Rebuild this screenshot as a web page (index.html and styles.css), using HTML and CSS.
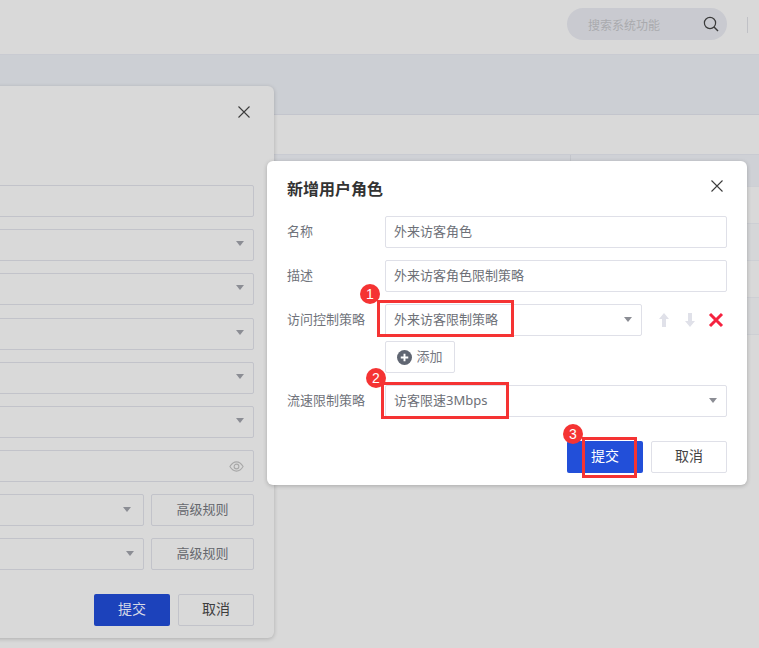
FILE: index.html
```html
<!DOCTYPE html>
<html lang="zh">
<head>
<meta charset="utf-8">
<title>新增用户角色</title>
<link rel="stylesheet" href="styles.css">
</head>
<body>
<div class="page">
  <header class="topbar">
    <div class="search">
      <span class="search-text">搜索系统功能</span>
      <svg class="search-icon" viewBox="0 0 16 16" width="16" height="16"><circle cx="7" cy="7" r="5.6" fill="none" stroke="#3a3a3a" stroke-width="1.2"/><path d="M11 11l4 4" stroke="#3a3a3a" stroke-width="1.4" fill="none"/></svg>
    </div>
    <span class="topbar-sep"></span>
  </header>
  <div class="band"></div>
  <div class="tabs"></div>
  <div class="table">
    <div class="table-row head"><span class="cell-line"></span></div>
    <div class="table-row"></div>
    <div class="table-row alt"></div>
    <div class="table-row"></div>
    <div class="table-row alt"></div>
  </div>
</div>

<section class="dialog back">
  <button class="close" type="button"><svg viewBox="0 0 12 12" width="12" height="12"><path d="M.5.5l11 11M11.5.5l-11 11" stroke="#3c3c3c" stroke-width="1.1" fill="none"/></svg></button>
  <div class="back-form">
    <div class="box"></div>
    <div class="box select"><i class="caret"></i></div>
    <div class="box select"><i class="caret"></i></div>
    <div class="box select nudge"><i class="caret"></i></div>
    <div class="box select"><i class="caret"></i></div>
    <div class="box select"><i class="caret"></i></div>
    <div class="box select eye-box"><svg viewBox="0 0 16 12" width="15" height="11"><path d="M.8 6C3 2.5 5.4 1 8 1s5 1.500 7.200 5C13 9.500 10.600 11 8 11S3 9.500.8 6z" fill="none" stroke="#a8a8a8" stroke-width="1.2"/><circle cx="8" cy="6" r="2.600" fill="none" stroke="#a8a8a8" stroke-width="1.200"/></svg></div>
    <div class="rule-row"><div class="box select grow"><i class="caret"></i></div><div class="box btn rule"><span class="txt">高级规则</span></div></div>
    <div class="rule-row wide"><div class="box select grow"><i class="caret"></i></div><div class="box btn rule"><span class="txt">高级规则</span></div></div>
  </div>
  <div class="actions back-actions"><button class="btn-main dim" type="button"><span class="txt">提交</span></button><button class="btn-plain dim-plain" type="button"><span class="txt">取消</span></button></div>
</section>

<section class="dialog front">
  <header class="dialog-head">
    <h2 class="dialog-title">新增用户角色</h2>
    <button class="close" type="button"><svg viewBox="0 0 12 12" width="12" height="12"><path d="M.5.5l11 11M11.500.5l-11 11" stroke="#3c3c3c" stroke-width="1.100" fill="none"/></svg></button>
  </header>
  <div class="form">
    <div class="field"><label class="field-label"><span class="txt">名称</span></label><div class="box value"><span class="txt">外来访客角色</span></div></div>
    <div class="field"><label class="field-label"><span class="txt">描述</span></label><div class="box value"><span class="txt">外来访客角色限制策略</span></div></div>
    <div class="field">
      <label class="field-label"><span class="txt">访问控制策略</span></label>
      <div class="box value select grow"><span class="txt">外来访客限制策略</span><i class="caret"></i></div>
      <div class="row-tools">
        <svg viewBox="0 0 12 16" width="12" height="16"><path d="M6 1L1 7h3v8h4V7h3z" fill="#e0e1e9"/></svg>
        <svg viewBox="0 0 12 16" width="12" height="16"><path d="M6 15L1 9h3V1h4v8h3z" fill="#e0e1e9"/></svg>
        <svg class="remove" viewBox="0 0 16 16" width="16" height="16"><path d="M2 2l12 12M14 2L2 14" stroke="#f5223f" stroke-width="3" fill="none"/></svg>
      </div>
    </div>
    <div class="add-row">
      <button class="box add" type="button">
        <svg viewBox="0 0 14 14" width="15" height="15"><circle cx="7" cy="7" r="7" fill="#606672"/><path d="M7 3.500v7M3.500 7h7" stroke="#fff" stroke-width="1.800" fill="none"/></svg>
        <span class="txt">添加</span>
      </button>
    </div>
    <div class="field"><label class="field-label"><span class="txt">流速限制策略</span></label><div class="box value select"><span class="txt">访客限速3Mbps</span><i class="caret"></i></div></div>
  </div>
  <div class="actions"><button class="btn-main" type="button"><span class="txt">提交</span></button><button class="btn-plain" type="button"><span class="txt">取消</span></button></div>
</section>

<div class="mark m1"></div><span class="num n1">1</span>
<div class="mark m2"></div><span class="num n2">2</span>
<div class="mark m3"></div><span class="num n3">3</span>
</body>
</html>
```
FILE: styles.css
```css
* { box-sizing: border-box; }
html, body { margin: 0; height: 100%; }
body {
  position: relative;
  width: 759px;
  height: 648px;
  overflow: hidden;
  background: #d9d9d9;
  font-family: "Noto Sans", "Noto Sans CJK SC", sans-serif;
  font-size: 13px;
  color: #6d7077;
}
.txt { display: block; line-height: 18px; transform: translateY(-1px); }
.page { display: flex; flex-direction: column; }
.topbar {
  height: 55px;
  border-bottom: 1px solid #c9cbd2;
  display: flex;
  align-items: center;
  justify-content: flex-end;
  padding: 0 11px 0 0;
}
.search {
  width: 160px;
  height: 32px;
  margin: -7px 20px 0 0;
  border-radius: 16px;
  background: #c9cad0;
  display: flex;
  align-items: center;
  justify-content: space-between;
  padding: 0 7px 0 21px;
}
.search-text { font-size: 12px; color: #a9aaae; line-height: 18px; transform: translateY(2px); }
.search-icon { margin-right: 0; transform: translateX(-1px); }
.topbar-sep { width: 1px; height: 16px; margin-top: -5px; background: #c0c1c6; }
.band { height: 60px; background: #cccfd4; border-bottom: 1px solid #c3c5cd; }
.tabs { height: 39px; }
.table { border-top: 1px solid #c9cbd2; }
.table-row { height: 37px; border-bottom: 1px solid #cdcfd4; position: relative; }
.table-row.alt { background: #d5d6d8; }
.table-row.head { height: 32px; background: #cfd1d6; }
.cell-line { position: absolute; left: 570px; top: 0; width: 1px; height: 100%; background: #c3c5cb; }

.dialog { position: absolute; border-radius: 6px; }
.front {
  left: 267px; top: 161px; width: 480px; height: 324px;
  background: #fff;
  box-shadow: 0 1px 4px rgba(0,0,0,.22);
  padding: 0 20px;
  display: flex; flex-direction: column;
}
.back {
  left: -226px; top: 86px; width: 500px; height: 552px;
  background: #d9d9d9;
  box-shadow: 0 1px 4px rgba(0,0,0,.2);
  padding: 0 20px;
  display: flex; flex-direction: column;
}
.close { border: 0; background: none; padding: 0; width: 12px; height: 12px; display: block; line-height: 0; }
.back > .close { align-self: flex-end; margin: 20px 4px 0 0; }
.dialog-head { display: flex; justify-content: space-between; align-items: flex-start; height: 55px; padding-top: 19px; }
.dialog-head .close { margin-right: 4px; }
.dialog-title { margin: 0; font-size: 16px; line-height: 20px; font-weight: 700; color: #333; transform: translateY(-1px); }
.box { border: 1px solid #dfe0e8; border-radius: 2px; background: #fff; height: 32px; }
.form { display: flex; flex-direction: column; }
.field { display: flex; align-items: center; height: 32px; margin-bottom: 12px; }
.field-label { width: 98px; flex: none; color: #70737b; }
.value { flex: 1; display: flex; align-items: center; padding-left: 8px; color: #6d7077; }
.grow { flex: 1; }
.caret { position: absolute; right: 9px; top: 12px; width: 0; height: 0; border: 4px solid transparent; border-top: 5px solid #8b8d94; border-bottom: 0; }
.back .caret { top: 11px; }
.select { position: relative; }
.row-tools { width: 85px; flex: none; display: flex; align-items: center; padding: 0 0 1px 16px; gap: 14px; }
.remove { margin-left: -2px; }
.add-row { padding-left: 98px; margin: -7px 0 12px; }
.add { width: 70px; display: flex; align-items: center; justify-content: center; gap: 4px; font: inherit; color: #777a82; padding: 0; }
.actions { display: flex; justify-content: flex-end; gap: 8px; margin-top: auto; padding-bottom: 12px; }
.btn-main, .btn-plain { width: 76px; height: 32px; border-radius: 2px; font: inherit; font-size: 14px; padding: 0; }
.btn-main { background: #224fd9; border: 0; color: #fff; }
.btn-plain { background: #fff; border: 1px solid #dfe0e8; color: #444; }
.back-form { display: flex; flex-direction: column; gap: 12px; margin-top: 67px; }
.back .box { background: transparent; border-color: #c2c3ca; }
.nudge { margin-top: 1px; }
.eye-box svg { position: absolute; right: 9px; top: 10px; }
.rule-row { display: flex; gap: 7px; }
.rule { width: 103px; flex: none; display: flex; align-items: center; justify-content: center; color: #66686e; }
.back .rule-row .caret { right: 12px; top: 12px; }
.back .rule-row.wide .caret { right: 9px; }
.btn-main.dim { background: #1c42bb; color: #d6d9e6; }
.btn-plain.dim-plain { background: transparent; border-color: #c2c3ca; color: #3d3d3d; }

.mark { position: absolute; border: 3px solid #f53333; }
.m1 { left: 377px; top: 300px; width: 137px; height: 37px; }
.m2 { left: 381px; top: 382px; width: 128px; height: 37px; }
.m3 { left: 582px; top: 437px; width: 55px; height: 41px; }
.num { position: absolute; width: 20px; height: 20px; border-radius: 50%; background: #f53333; color: #fff; font-size: 14px; line-height: 20px; text-align: center; font-family: "Liberation Sans", sans-serif; }
.n1 { left: 360px; top: 284px; }
.n2 { left: 366px; top: 368px; }
.n3 { left: 563px; top: 424px; }
```
